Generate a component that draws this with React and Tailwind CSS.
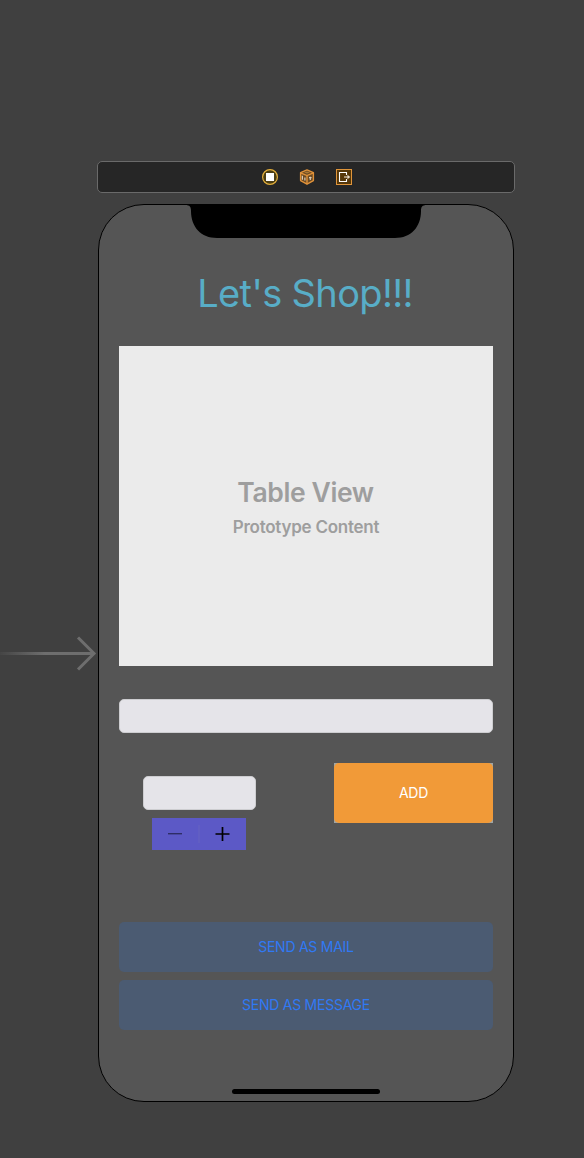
import React from "react";

function SceneDock() {
  return (
    <div className="mx-auto flex h-8 w-[418px] items-center justify-center gap-[21px] rounded-[5px] border border-[#6a6a6a] bg-[#262626] pl-[2px]">
      <svg width="16" height="16" viewBox="0 0 16 16">
        <circle cx="8" cy="8" r="7.4" fill="#4b3d12" stroke="#e5b03b" strokeWidth="1.2" />
        <rect x="4" y="4" width="8" height="8" fill="#fff" />
      </svg>
      <svg width="16" height="16" viewBox="0 0 16 16">
        <path d="M8 0.9 14.4 3.6V11.6L8 15.2 1.6 11.6V3.6Z" fill="#6b4a22" stroke="#e0923a" strokeWidth="1.4" strokeLinejoin="round" />
        <path d="M1.6 3.8 8 6.6 14.4 3.8M8 6.6V15" fill="none" stroke="#e0923a" strokeWidth="1.4" />
        <path d="M5 3.6 8 2.6 11 3.6 8 4.6Z" fill="#a97835" />
        <path d="M3.4 6.8V10.8M5.9 8.4V11.4M10 8.6H12.6M11.3 7.8V11" fill="none" stroke="#d9cbb8" strokeWidth="1.2" />
      </svg>
      <svg width="16" height="16" viewBox="0 0 16 16">
        <rect x="0.5" y="0.5" width="15" height="15" fill="#553709" stroke="#e0953a" />
        <path d="M10.5 6V3.5H3.5V12.5H10.5V10" fill="none" stroke="#fff" strokeWidth="1.1" />
        <path d="M8 8H12" stroke="#c9b79b" strokeWidth="1.4" />
        <path d="M11.5 5.8 14.2 8 11.5 10.2Z" fill="#e6dccd" />
      </svg>
    </div>
  );
}

function EntryArrow() {
  return (
    <svg className="absolute top-[634px] left-0" width="98" height="40" viewBox="0 0 98 40">
      <defs>
        <linearGradient id="shaft" gradientUnits="userSpaceOnUse" x1="0" y1="0" x2="45" y2="0">
          <stop offset="0" stopColor="#454545" />
          <stop offset="1" stopColor="#6e6e6e" />
        </linearGradient>
      </defs>
      <rect x="0" y="18" width="93" height="3" fill="url(#shaft)" />
      <path d="M78 3.5 94 19.5 78 35.5" fill="none" stroke="#6e6e6e" strokeWidth="3" />
    </svg>
  );
}

function Notch() {
  return (
    <svg className="absolute top-0 left-[86px]" width="242" height="34" viewBox="0 0 242 34">
      <path d="M0 0H242C237 0 236 2 236 6C236 22 226 33 210 33H32C16 33 6 22 6 6C6 2 5 0 0 0Z" fill="#000" />
    </svg>
  );
}

function Stepper() {
  return (
    <div className="flex h-8 w-[94px] items-center bg-[#5c59c6]">
      <svg width="94" height="32" viewBox="0 0 94 32">
        <path d="M16 15.7H30" stroke="#2e2d66" strokeWidth="1.4" />
        <path d="M47 7V25" stroke="#6764c0" strokeWidth="1" />
        <path d="M63.5 16H77.500M70.500 9V23" stroke="#000" strokeWidth="1.7" />
      </svg>
    </div>
  );
}

function SendButton({ children }) {
  return (
    <button className="flex h-[50px] items-center justify-center rounded-[5px] bg-[#4b5b72] pb-px text-[14px] tracking-[-0.25px] text-[#3079f4]">
      {children}
    </button>
  );
}

export default function App() {
  return (
    <div className="relative h-[1158px] w-[584px] overflow-hidden bg-[#404040] pt-[161px] pl-[97px] font-['Inter','Liberation_Sans',sans-serif] whitespace-nowrap">
      <div className="w-[418px]">
        <SceneDock />
        <main className="relative mx-auto mt-[11px] flex h-[898px] w-[416px] flex-col overflow-hidden rounded-[46px] border border-black bg-[#555555] px-5 pt-[64px]">
          <Notch />
          <h1 className="flex h-12 items-center justify-center pr-[2px] text-[38px] tracking-[-0.65px] text-[#58adc7]">Let's Shop!!!</h1>
          <section className="mt-[29px] flex h-80 shrink-0 flex-col items-center bg-[#ebebeb] pt-[129px] text-[#9e9e9e]">
            <div className="pr-px text-[26.5px] leading-[34px] font-semibold tracking-[-0.4px]">Table View</div>
            <div className="mt-2 text-[17px] leading-[20px] font-semibold tracking-[-0.25px]">Prototype Content</div>
          </section>
          <div className="mt-[33px] h-[34px] shrink-0 rounded-[5px] border border-[#cdcdd0] bg-[#e5e4e9]" />
          <div className="mt-[30px] flex shrink-0 items-start justify-between pl-6">
            <div className="flex flex-col gap-2 pt-[13px]">
              <div className="h-[34px] w-[113px] rounded-[5px] border border-[#cdcdd0] bg-[#e5e4e9]" />
              <div className="pl-[9px]">
                <Stepper />
              </div>
            </div>
            <div className="bg-[#9fa5a5]">
              <button className="flex h-[60px] w-[159px] items-center justify-center rounded-[5px] bg-[#f19a38] pb-px text-[14px] tracking-[-0.25px] text-white">ADD</button>
            </div>
          </div>
          <div className="mt-[72px] flex shrink-0 flex-col gap-2">
            <SendButton>SEND AS MAIL</SendButton>
            <SendButton>SEND AS MESSAGE</SendButton>
          </div>
          <div className="mx-auto mt-[59px] h-[5px] w-[148px] shrink-0 rounded-full bg-black" />
        </main>
      </div>
      <EntryArrow />
    </div>
  );
}
